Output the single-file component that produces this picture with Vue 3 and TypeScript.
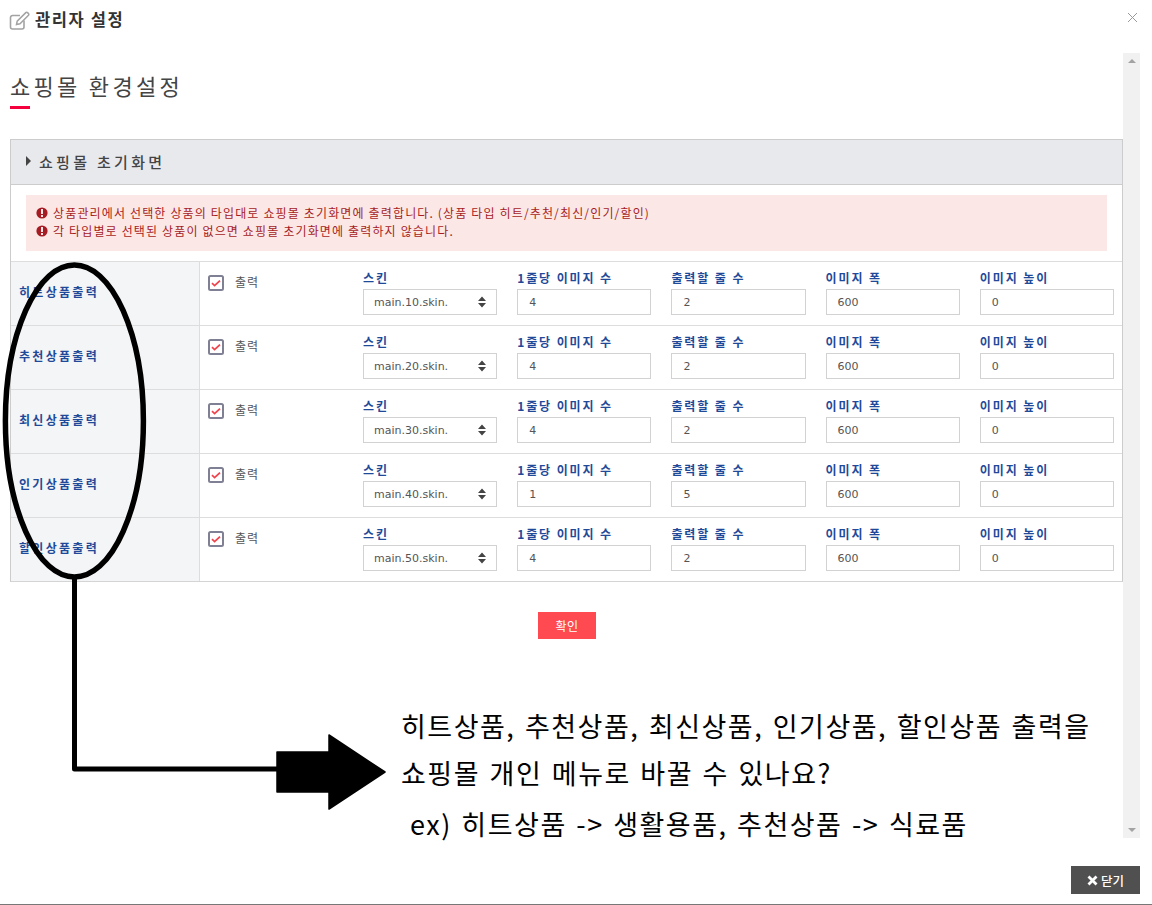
<template>
  <div class="modal">
    <header class="modal-head">
      <svg class="edit-icon" width="22" height="20" viewBox="0 0 22 20" aria-hidden="true">
        <path d="M15 9.5V16a2 2 0 0 1-2 2H3.5a2 2 0 0 1-2-2V6.5a2 2 0 0 1 2-2H11" fill="none" stroke="#a3a3a3" stroke-width="1.6" />
        <path d="M7.5 13.5l.7-3.4L16.8 1.6a1.2 1.2 0 0 1 1.7 0l1 1a1.2 1.2 0 0 1 0 1.7L11 12.8z" fill="none" stroke="#a3a3a3" stroke-width="1.5" />
      </svg>
      <h1>관리자 설정</h1>
      <button type="button" class="close-x" aria-label="닫기">
        <svg width="11" height="11" viewBox="0 0 11 11"><path d="M1 1l9 9M10 1l-9 9" stroke="#9a9a9a" stroke-width="1" /></svg>
      </button>
    </header>

    <div class="modal-body">
      <main class="content">
        <h2 class="page-title">쇼핑몰 환경설정</h2>
        <div class="title-bar"></div>

        <section class="panel">
          <div class="panel-head">
            <span class="caret"></span>
            <h3>쇼핑몰 초기화면</h3>
          </div>
          <div class="alert">
            <p v-for="msg in notices" :key="msg">
              <svg width="12" height="12" viewBox="0 0 12 12" aria-hidden="true">
                <circle cx="6" cy="6" r="5.6" fill="#a61c24" />
                <rect x="5" y="2" width="2" height="5" fill="#fbe8e6" />
                <rect x="5" y="8" width="2" height="2" fill="#fbe8e6" />
              </svg>
              <span>{{ msg }}</span>
            </p>
          </div>

          <div v-for="row in rows" :key="row.label" class="row">
            <div class="row-label">{{ row.label }}</div>
            <div class="row-cell">
              <label class="check">
                <svg width="16" height="16" viewBox="0 0 16 16" aria-hidden="true">
                  <rect x="1" y="1" width="14" height="14" rx="1.5" fill="#fff" stroke="#7f8093" stroke-width="2" />
                  <path d="M4 8.2l2.6 2.4L12 5.6" fill="none" stroke="#f0444e" stroke-width="1.8" />
                </svg>
                <span>출력</span>
              </label>
              <div class="field">
                <label>스킨</label>
                <div class="select-wrap">
                  <select>
                    <option>{{ row.skin }}</option>
                  </select>
                  <svg class="select-arrow" width="8" height="12" viewBox="0 0 8 12" aria-hidden="true">
                    <path d="M4 0.5L8 5H0zM4 11.5L0 7h8z" fill="#444" />
                  </svg>
                </div>
              </div>
              <div class="field">
                <label>1줄당 이미지 수</label>
                <input type="text" :value="row.perLine" />
              </div>
              <div class="field">
                <label>출력할 줄 수</label>
                <input type="text" :value="row.lines" />
              </div>
              <div class="field">
                <label>이미지 폭</label>
                <input type="text" value="600" />
              </div>
              <div class="field">
                <label>이미지 높이</label>
                <input type="text" value="0" />
              </div>
            </div>
          </div>
        </section>

        <div class="actions">
          <button type="button" class="confirm">확인</button>
        </div>
      </main>

      <div class="scrollbar">
        <span class="arrow up"></span>
        <span class="arrow down"></span>
      </div>
    </div>

    <footer class="modal-foot">
      <button type="button" class="close-btn">
        <svg width="11" height="11" viewBox="0 0 11 11" aria-hidden="true">
          <path d="M1.5 1.5l8 8M9.5 1.5l-8 8" stroke="#fff" stroke-width="2.8" />
        </svg>
        닫기
      </button>
    </footer>

    <!-- hand drawn note on top of the screenshot -->
    <svg class="markup" width="1152" height="905" viewBox="0 0 1152 905" aria-hidden="true">
      <ellipse cx="74.4" cy="421" rx="69" ry="156" fill="none" stroke="#000" stroke-width="5.5" />
      <path d="M74.5 579V769H280" fill="none" stroke="#000" stroke-width="5" stroke-linejoin="round" />
      <path d="M277 752H329V735L385 772L329 809V792H277z" fill="#000" stroke="#000" stroke-width="1.5" stroke-linejoin="round" />
    </svg>
    <div class="note">
      <p>히트상품, 추천상품, 최신상품, 인기상품, 할인상품 출력을</p>
      <p>쇼핑몰 개인 메뉴로 바꿀 수 있나요?</p>
      <p class="indent">ex) 히트상품 -&gt; 생활용품, 추천상품 -&gt; 식료품</p>
    </div>
  </div>
</template>

<script setup lang="ts">
interface SkinRow {
  label: string
  skin: string
  perLine: number
  lines: number
}

const notices = [
  '상품관리에서 선택한 상품의 타입대로 쇼핑몰 초기화면에 출력합니다. (상품 타입 히트/추천/최신/인기/할인)',
  '각 타입별로 선택된 상품이 없으면 쇼핑몰 초기화면에 출력하지 않습니다.',
]

const rows: SkinRow[] = [
  { label: '히트상품출력', skin: 'main.10.skin.', perLine: 4, lines: 2 },
  { label: '추천상품출력', skin: 'main.20.skin.', perLine: 4, lines: 2 },
  { label: '최신상품출력', skin: 'main.30.skin.', perLine: 4, lines: 2 },
  { label: '인기상품출력', skin: 'main.40.skin.', perLine: 1, lines: 5 },
  { label: '할인상품출력', skin: 'main.50.skin.', perLine: 4, lines: 2 },
]
</script>

<style>
html,
body {
  background: #fff;
  overflow: hidden;
}
</style>

<style scoped>
.modal {
  position: relative;
  width: 1152px;
  height: 905px;
  overflow: hidden;
  display: flex;
  flex-direction: column;
  box-sizing: border-box;
  border-bottom: 1px solid #777;
  font-family: "Noto Sans CJK KR", "Liberation Sans", sans-serif;
  color: #444;
  font-size: 12px;
}

.modal-head {
  height: 53px;
  flex: none;
  display: flex;
  align-items: flex-start;
  padding: 9px 14px 0 9px;
  box-sizing: border-box;
}

.edit-icon {
  margin-top: 2px;
  margin-right: 4px;
}

.modal-head h1 {
  margin: 0;
  font-size: 16.5px;
  line-height: 20px;
  font-weight: 700;
  letter-spacing: 1.6px;
  color: #333;
}

.close-x {
  margin-left: auto;
  margin-top: 3px;
  padding: 0;
  border: 0;
  background: none;
  line-height: 0;
}

.modal-body {
  height: 785px;
  flex: none;
  display: flex;
  padding-right: 12px;
}

.content {
  width: 1123px;
  flex: none;
  padding-left: 10px;
  box-sizing: border-box;
}

.page-title {
  margin: 18px 0 0;
  font-size: 22px;
  line-height: 28px;
  font-weight: 400;
  letter-spacing: 3.3px;
  color: #444;
}

.title-bar {
  width: 20px;
  height: 3px;
  margin-top: 7px;
  background: #f5003c;
}

.panel {
  margin-top: 30px;
  border: 1px solid #ccc;
  border-bottom-color: #d4d4d4;
}

.panel-head {
  height: 42px;
  display: flex;
  align-items: center;
  padding: 0 0 2px 15px;
  background: #e8e9ed;
  border-bottom: 1px solid #ccc;
}

.caret {
  width: 0;
  height: 0;
  border-left: 5px solid #444;
  border-top: 5px solid transparent;
  border-bottom: 5px solid transparent;
  margin-right: 8px;
}

.panel-head h3 {
  margin: 0;
  font-size: 15px;
  font-weight: 500;
  letter-spacing: 3.3px;
  color: #444;
}

.alert {
  margin: 10px 15px;
  height: 56px;
  padding: 9px 10px 0;
  box-sizing: border-box;
  background: #fbe8e6;
  color: #a61c24;
  font-size: 12px;
  letter-spacing: 1.15px;
}

.alert p {
  margin: 0;
  height: 18px;
  line-height: 18px;
  display: flex;
  align-items: center;
  gap: 5px;
  white-space: nowrap;
}

.row {
  height: 64px;
  display: flex;
  box-sizing: border-box;
  border-top: 1px solid #ddd;
}

.row-label {
  width: 189px;
  flex: none;
  box-sizing: border-box;
  padding: 21px 0 0 8px;
  background: #f4f5f7;
  border-right: 1px solid #ddd;
  color: #1f4a99;
  font-size: 12px;
  line-height: 18px;
  font-weight: 700;
  letter-spacing: 2.3px;
}

.row-cell {
  flex: 1;
  min-width: 0;
  display: grid;
  grid-template-columns: 135px repeat(5, minmax(0, 1fr));
  column-gap: 20px;
  padding: 0 8px;
}

.check {
  display: flex;
  align-items: flex-start;
  gap: 11px;
  padding-top: 13px;
  font-size: 12px;
  letter-spacing: 1px;
  color: #555;
}

.check span {
  line-height: 14px;
}

.field {
  display: flex;
  flex-direction: column;
  min-width: 0;
}

.field label {
  height: 27px;
  line-height: 18px;
  padding-top: 7px;
  box-sizing: border-box;
  font-size: 12px;
  font-weight: 700;
  letter-spacing: 1.9px;
  color: #1f4a99;
  white-space: nowrap;
}

.field input,
.field select {
  width: 100%;
  height: 26px;
  box-sizing: border-box;
  border: 1px solid #d2d2d2;
  border-radius: 0;
  background: #fff;
  padding: 0 11px;
  font-family: "DejaVu Sans", "Noto Sans CJK KR", sans-serif;
  font-size: 11px;
  color: #555;
  outline: none;
}

.select-wrap {
  position: relative;
}

.field select {
  appearance: none;
  padding: 0 10px;
}

.select-arrow {
  position: absolute;
  right: 11px;
  top: 7px;
}

.actions {
  display: flex;
  padding: 30px 0 0 528px;
}

.confirm {
  width: 58px;
  height: 27px;
  padding: 0;
  border: 0;
  background: #ff4a52;
  color: #fff;
  font-family: inherit;
  font-size: 12px;
  letter-spacing: 0.5px;
}

.scrollbar {
  width: 17px;
  flex: none;
  position: relative;
  background: #f1f1f1;
}

.arrow {
  position: absolute;
  left: 5px;
  width: 0;
  height: 0;
  border-left: 4px solid transparent;
  border-right: 4px solid transparent;
}

.arrow.up {
  top: 6px;
  border-bottom: 4px solid #a3a3a3;
}

.arrow.down {
  bottom: 6px;
  border-top: 4px solid #a3a3a3;
}

.modal-foot {
  flex: 1;
  display: flex;
  justify-content: flex-end;
  align-items: flex-start;
  padding: 28px 12px 0 0;
}

.close-btn {
  width: 69px;
  height: 28px;
  padding: 0;
  border: 0;
  background: #505050;
  color: #fff;
  display: flex;
  align-items: center;
  justify-content: center;
  gap: 3px;
  font-family: inherit;
  font-size: 12.5px;
  font-weight: 500;
}

.markup {
  position: absolute;
  left: 0;
  top: 0;
  pointer-events: none;
}

.note {
  position: absolute;
  left: 401px;
  top: 701px;
  font-size: 27px;
  letter-spacing: 1.5px;
  word-spacing: 2px;
  color: #000;
  white-space: nowrap;
}

.note p {
  margin: 0;
  height: 47px;
  line-height: 49px;
}

.note p:nth-child(2) {
  height: 51px;
}

.note .indent {
  padding-left: 9px;
}
</style>
